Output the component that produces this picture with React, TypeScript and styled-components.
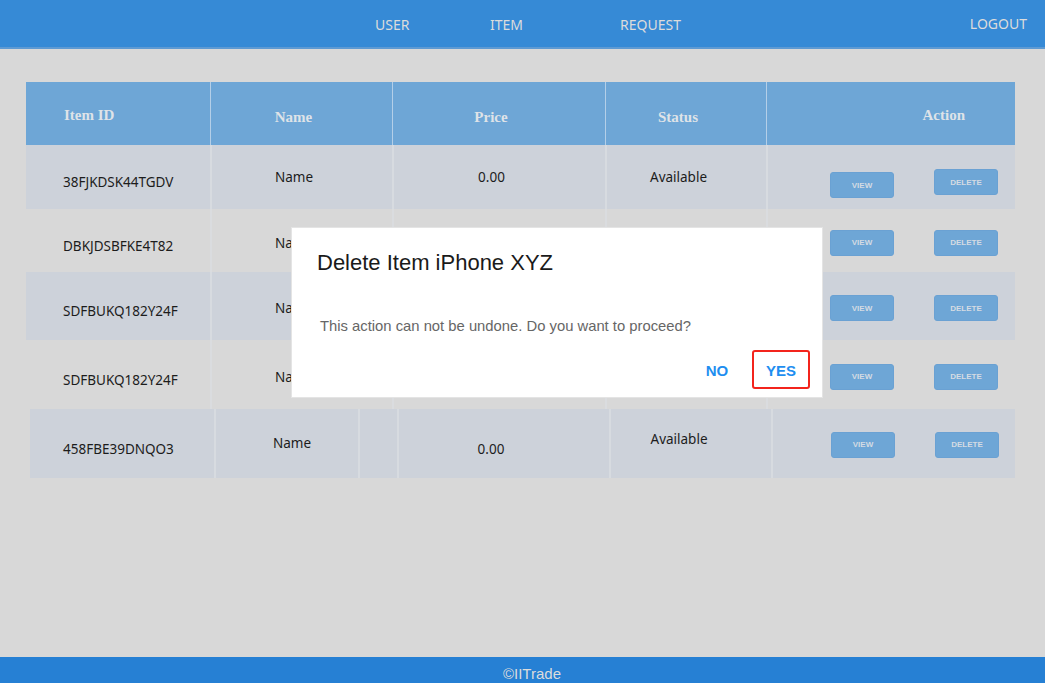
import React from "react";
import styled, { createGlobalStyle } from "styled-components";

const Global = createGlobalStyle`
  html, body { margin: 0; padding: 0; }
  body {
    background: #d8d8d8;
    font-family: "Noto Sans", "Open Sans", sans-serif;
    overflow: hidden;
  }
`;

const Page = styled.div`
  display: flex;
  flex-direction: column;
  height: 683px;
  width: 1045px;
  background: #d8d8d8;
`;

const Header = styled.header`
  height: 47px;
  flex: 0 0 47px;
  background: #368ad6;
  border-bottom: 2px solid #5e9ad3;
  display: flex;
  align-items: center;
  padding: 0 18px 0 375px;
  box-sizing: content-box;
`;

const Nav = styled.nav`
  display: grid;
  grid-template-columns: 115px 130px auto;
  flex: 1;
`;

const NavLink = styled.a`
  color: #dcdcdc;
  font-size: 14px;
  font-family: "Noto Sans", sans-serif;
  text-decoration: none;
  line-height: 20px;
  margin-top: 3px;
`;

const Logout = styled(NavLink)`
  margin-top: 0;
`;

const Main = styled.main`
  flex: 1;
  padding: 33px 30px 0 26px;
`;

const Table = styled.div`
  display: flex;
  flex-direction: column;
  width: 989px;
`;

const HeadRow = styled.div`
  display: grid;
  grid-template-columns: 184px 182px 213px 161px 249px;
  height: 63px;
  background: #6ea6d6;
`;

const HeadCell = styled.div<{ $align?: string; $pad?: string; $dy?: number }>`
  display: flex;
  align-items: center;
  justify-content: ${(p) => p.$align || "center"};
  padding: ${(p) => p.$pad || "0 16px 0 0"};
  font-family: "Liberation Serif", "DejaVu Serif", serif;
  font-weight: bold;
  font-size: 15px;
  color: #dfe3e8;
  border-left: 1px solid #b4cfe8;
  & > span {
    position: relative;
    top: ${(p) => p.$dy ?? 4}px;
  }
  &:first-child { border-left: none; }
`;

const Row = styled.div<{ $tint: boolean; $h: number; $cols: string; $shift?: number }>`
  display: grid;
  grid-template-columns: ${(p) => p.$cols};
  height: ${(p) => p.$h}px;
  background: ${(p) => (p.$tint ? "#cdd2da" : "#d8d8d8")};
  margin-left: ${(p) => p.$shift || 0}px;
`;

const Cell = styled.div<{ $dy?: number; $left?: boolean; $pad?: string }>`
  display: flex;
  align-items: center;
  justify-content: ${(p) => (p.$left ? "flex-start" : "center")};
  padding: ${(p) => p.$pad || (p.$left ? "0 0 0 37px" : "0 16px 0 0")};
  font-size: 13.5px;
  color: #1c1c1c;
  border-left: 2px solid rgba(220, 222, 226, 0.7);
  & > span {
    position: relative;
    top: ${(p) => p.$dy || 0}px;
  }
  &:first-child { border-left: none; }
`;

const ActionCell = styled.div<{ $right?: number }>`
  display: flex;
  align-items: center;
  justify-content: flex-end;
  gap: 40px;
  padding-right: ${(p) => p.$right ?? 17}px;
  border-left: 2px solid rgba(220, 222, 226, 0.7);
`;

const SmallButton = styled.button<{ $dy?: number }>`
  width: 64px;
  height: 26px;
  border: 1px solid #6aa1d3;
  border-radius: 3px;
  background: #6ea6d6;
  color: #d4dbe3;
  font-family: "Liberation Sans", Arial, sans-serif;
  font-weight: bold;
  font-size: 8px;
  text-transform: uppercase;
  padding: 0;
  position: relative;
  top: ${(p) => p.$dy || 0}px;
`;

const Footer = styled.footer`
  height: 26px;
  flex: 0 0 26px;
  background: #2680d4;
  text-align: center;
  color: #dcdcdc;
  font-family: "Liberation Sans", Arial, sans-serif;
  font-size: 15px;
  line-height: 16px;
  padding: 9px 0 0 19px;
  box-sizing: border-box;
  overflow: hidden;
`;

const Dialog = styled.div`
  position: fixed;
  left: 291px;
  top: 227px;
  width: 532px;
  height: 171px;
  box-sizing: border-box;
  background: #ffffff;
  border: 1px solid #e4e4e4;
  display: flex;
  flex-direction: column;
  padding: 20px 12px 8px 25px;
  font-family: "Liberation Sans", Arial, sans-serif;
`;

const DialogTitle = styled.h2`
  margin: 0;
  font-weight: normal;
  font-size: 22px;
  line-height: 30px;
  color: #1a1a1a;
`;

const DialogBody = styled.p`
  margin: 38px 0 0 3px;
  font-size: 14.8px;
  color: #666666;
  line-height: 20px;
`;

const DialogActions = styled.div`
  display: flex;
  justify-content: flex-end;
  gap: 6px;
  margin-top: auto;
`;

const TextButton = styled.button<{ $focus?: boolean }>`
  width: 58px;
  height: 39px;
  box-sizing: border-box;
  background: transparent;
  border: 2px solid ${(p) => (p.$focus ? "#f3241c" : "transparent")};
  border-radius: 3px;
  color: #1e8ef0;
  font-family: "Liberation Sans", Arial, sans-serif;
  font-weight: bold;
  font-size: 15px;
  padding: 2px 0 0;
`;

type Item = {
  id: string;
  name: string;
  price: string;
  status: string;
};

const rows: { item: Item; tint: boolean; h: number }[] = [
  { item: { id: "38FJKDSK44TGDV", name: "Name", price: "0.00", status: "Available" }, tint: true, h: 64 },
  { item: { id: "DBKJDSBFKE4T82", name: "Name", price: "0.00", status: "Available" }, tint: false, h: 63 },
  { item: { id: "SDFBUKQ182Y24F", name: "Name", price: "0.00", status: "Available" }, tint: true, h: 68 },
  { item: { id: "SDFBUKQ182Y24F", name: "Name", price: "0.00", status: "Available" }, tint: false, h: 69 },
];

const COLS = "184px 182px 213px 161px 249px";

export default function App() {
  return (
    <Page>
      <Global />
      <Header>
        <Nav>
          <NavLink>USER</NavLink>
          <NavLink>ITEM</NavLink>
          <NavLink>REQUEST</NavLink>
        </Nav>
        <Logout>LOGOUT</Logout>
      </Header>
      <Main>
        <Table>
          <HeadRow>
            <HeadCell $align="flex-start" $pad="0 0 0 38px" $dy={2}><span>Item ID</span></HeadCell>
            <HeadCell><span>Name</span></HeadCell>
            <HeadCell><span>Price</span></HeadCell>
            <HeadCell><span>Status</span></HeadCell>
            <HeadCell $align="flex-end" $pad="0 50px 0 0" $dy={2}><span>Action</span></HeadCell>
          </HeadRow>
          {rows.map((r, i) => (
            <Row key={i} $tint={r.tint} $h={r.h} $cols={COLS}>
              <Cell $left $dy={5}><span>{r.item.id}</span></Cell>
              <Cell $dy={i === 0 ? 0 : 2}><span>{r.item.name}</span></Cell>
              <Cell><span>{i === 0 ? r.item.price : ""}</span></Cell>
              <Cell><span>{i === 0 ? r.item.status : ""}</span></Cell>
              <ActionCell>
                <SmallButton $dy={i === 0 ? 8 : 2}>View</SmallButton>
                <SmallButton $dy={i === 0 ? 5 : 2}>Delete</SmallButton>
              </ActionCell>
            </Row>
          ))}
          <Row $tint $h={69} $cols="184px 144px 39px 212px 162px 246px" $shift={4}>
            <Cell $left $pad="0 0 0 33px" $dy={5}><span>458FBE39DNQO3</span></Cell>
            <Cell $dy={-1} $pad="0 0 0 10px"><span>Name</span></Cell>
            <Cell />
            <Cell $dy={5} $pad="0 26px 0 0"><span>0.00</span></Cell>
            <Cell $dy={-5} $pad="0 24px 0 0"><span>Available</span></Cell>
            <ActionCell $right={18}>
              <SmallButton $dy={1}>View</SmallButton>
              <SmallButton $dy={1}>Delete</SmallButton>
            </ActionCell>
          </Row>
        </Table>
      </Main>
      <Footer>©IITrade</Footer>
      <Dialog role="dialog">
        <DialogTitle>Delete Item iPhone XYZ</DialogTitle>
        <DialogBody>This action can not be undone. Do you want to proceed?</DialogBody>
        <DialogActions>
          <TextButton>NO</TextButton>
          <TextButton $focus>YES</TextButton>
        </DialogActions>
      </Dialog>
    </Page>
  );
}
